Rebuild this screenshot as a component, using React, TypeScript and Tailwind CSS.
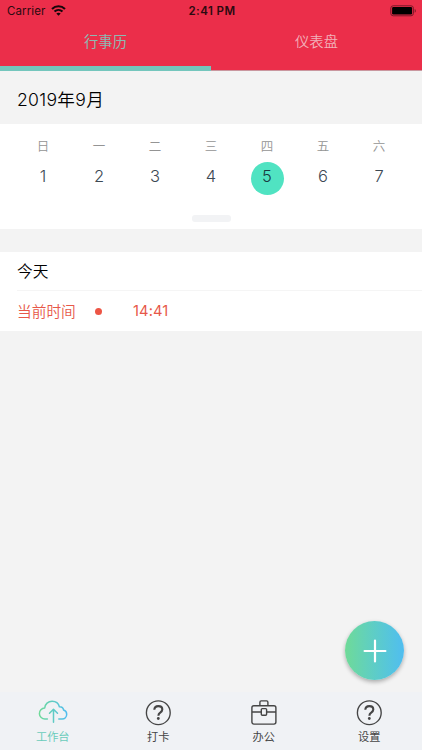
import type { ReactNode } from "react";

const days = [
  ["日", 1],
  ["一", 2],
  ["二", 3],
  ["三", 4],
  ["四", 5],
  ["五", 6],
  ["六", 7],
] as const;

function StatusBar() {
  return (
    <div className="flex h-[22px] items-center justify-between pl-[7px] pr-[5px] text-[11.5px] leading-[22px] text-[#2b0a10]">
      <div className="flex w-[100px] items-center gap-[6px]">
        <span className="tracking-[0.1px]">Carrier</span>
        <svg className="-mt-px" width="15" height="11" viewBox="0 0 15 11" fill="none" stroke="#16060a" strokeWidth="2.1">
          <path d="M1 3.9C4.7.4 10.3.4 14 3.9" />
          <path d="M3.5 6.5c2.3-2.1 5.7-2.1 8 0" />
          <path d="M7.5 10.8 5.3 8.6c1.2-1.1 3.2-1.1 4.4 0Z" fill="#16060a" stroke="none" />
        </svg>
      </div>
      <span className="font-semibold tracking-[0.45px]">2:41 PM</span>
      <div className="flex w-[100px] justify-end">
        <svg width="27" height="12" viewBox="0 0 27 12">
          <rect x=".8" y=".8" width="22.6" height="10" rx="2.4" fill="none" stroke="#7a1828" />
          <rect x="2.1" y="2.1" width="20" height="7.4" rx="1.2" fill="#000" />
          <path d="M24.7 4v3.8c1.5-.6 1.5-3.2 0-3.8Z" fill="#7a1828" />
        </svg>
      </div>
    </div>
  );
}

function CloudIcon() {
  return (
    <svg width="30" height="26" viewBox="0 0 30 26" fill="none" stroke="url(#cloud)" strokeWidth="1.5" strokeLinecap="round" strokeLinejoin="round">
      <defs>
        <linearGradient id="cloud" gradientUnits="userSpaceOnUse" x1="1" y1="0" x2="29" y2="0">
          <stop offset="0" stopColor="#6fda97" />
          <stop offset="1" stopColor="#50bdf0" />
        </linearGradient>
      </defs>
      <path d="M9.4 19H7.1A5.5 5.5 0 0 1 6.7 8C7 4.1 10.2 1.2 14.1 1.2c3.5 0 6.5 2.3 7.3 5.6 2.3-.1 3.9 1.4 4.2 3.3 1.9.5 3.1 2.2 3.1 4.2 0 2.7-2 4.7-4.6 4.7h-3.3" />
      <path d="M15.5 22.3V9.4M11.5 13.2l4-4 4 4" />
    </svg>
  );
}

function QuestionIcon() {
  return (
    <svg width="26" height="26" viewBox="0 0 26 26" fill="none" stroke="#454545">
      <circle cx="13.3" cy="12.7" r="11.9" strokeWidth="1.35" />
      <path d="M9.3 9.8c.1-2.4 1.7-3.7 4-3.7s4 1.3 4 3.4c0 1.5-1 2.3-2.1 3.1-1.3.9-1.8 1.5-1.8 3.2" strokeWidth="2.1" />
      <circle cx="13.3" cy="18.5" r="1.4" fill="#454545" stroke="none" />
    </svg>
  );
}

function BriefcaseIcon() {
  return (
    <svg width="26" height="26" viewBox="0 0 26 26" fill="none" stroke="#454545" strokeWidth="1.4">
      <rect x=".9" y="5.8" width="24" height="18.3" rx="2" />
      <path d="M8.9 5.8V2.3c0-.9.5-1.4 1.3-1.4h5.4c.8 0 1.3.5 1.3 1.4v3.5" />
      <path d="M1 12h9.3M15.6 12H25" />
      <rect x="10.3" y="8.6" width="5.3" height="6.6" rx="1" />
    </svg>
  );
}

function Tab({ icon, label, active = false }: { icon: ReactNode; label: string; active?: boolean }) {
  return (
    <div className={`flex flex-1 flex-col items-center pt-[8px] text-[11.2px] leading-[14px] ${active ? "text-[#6accbb]" : "text-[#454545]"}`}>
      {icon}
      <span className="mt-[4px]">{label}</span>
    </div>
  );
}

export default function App() {
  return (
    <div className="flex h-[750px] w-[422px] flex-col overflow-hidden bg-[#f3f3f3] font-['Inter','Noto_Sans_CJK_SC',sans-serif] font-[350]">
      <header className="flex h-[71px] shrink-0 flex-col bg-[#eb2e4a] font-normal">
        <StatusBar />
        <nav className="grid flex-1 grid-cols-2 border-b border-[#c9979f] text-center text-[14.3px] leading-[39px]">
          <div className="-mb-px border-b-[5px] border-[#74c6bd] text-[#8eb9b2]">行事历</div>
          <div className="font-[350] text-[#f2b1ba]">仪表盘</div>
        </nav>
      </header>

      <h1 className="h-[53px] shrink-0 pl-[17px] text-[17.6px] font-[350] leading-[57px] tracking-[0.3px] text-black">2019年9月</h1>

      <section className="flex h-[105px] shrink-0 flex-col items-center bg-white px-[15px]">
        <div className="grid w-full grid-cols-7 pt-[13px] text-center">
          {days.map(([name, day]) => (
            <div key={day} className="flex flex-col items-center">
              <span className="text-[12.5px] leading-[19px] text-[#949494]">{name}</span>
              <span className={`mt-[6px] size-[33px] rounded-full text-[16.5px] leading-[29px] ${day === 5 ? "bg-[#50e3c2] text-[#183a40]" : "text-[#3d4954]"}`}>
                {day}
              </span>
            </div>
          ))}
        </div>
        <div className="mt-[20px] h-[7px] w-[39px] rounded-[3px] bg-[#f2f3f5]" />
      </section>

      <section className="mt-[23px] h-[79px] shrink-0 bg-white pl-[17px]">
        <h2 className="h-[39px] border-b border-[#f5f5f5] text-[15.7px] font-[350] leading-[40px] text-black">今天</h2>
        <div className="flex h-[40px] items-center text-[14.7px] leading-[40px] text-[#e75849]">
          <span className="w-[78px] pt-px">当前时间</span>
          <span className="size-[7px] rounded-full bg-[#ed5545]" />
          <span className="ml-[31px] font-normal tracking-[0.1px]">14:41</span>
        </div>
      </section>

      <main className="flex flex-1 items-end justify-end pb-[12px] pr-[18px]">
        <button className="flex size-[59px] items-center justify-center rounded-full bg-gradient-to-r from-[#6fda97] to-[#50bdf0] shadow-[0_2px_4px_rgba(0,0,0,0.3)]">
          <svg width="24" height="24" viewBox="0 0 24 24" stroke="white" strokeWidth="2.2" strokeLinecap="round">
            <path d="M12 1.6v20.8M1.6 12h20.8" />
          </svg>
        </button>
      </main>

      <footer className="flex h-[58px] shrink-0 bg-[#f0f2f5] font-normal">
        <Tab icon={<CloudIcon />} label="工作台" active />
        <Tab icon={<QuestionIcon />} label="打卡" />
        <Tab icon={<BriefcaseIcon />} label="办公" />
        <Tab icon={<QuestionIcon />} label="设置" />
      </footer>
    </div>
  );
}
